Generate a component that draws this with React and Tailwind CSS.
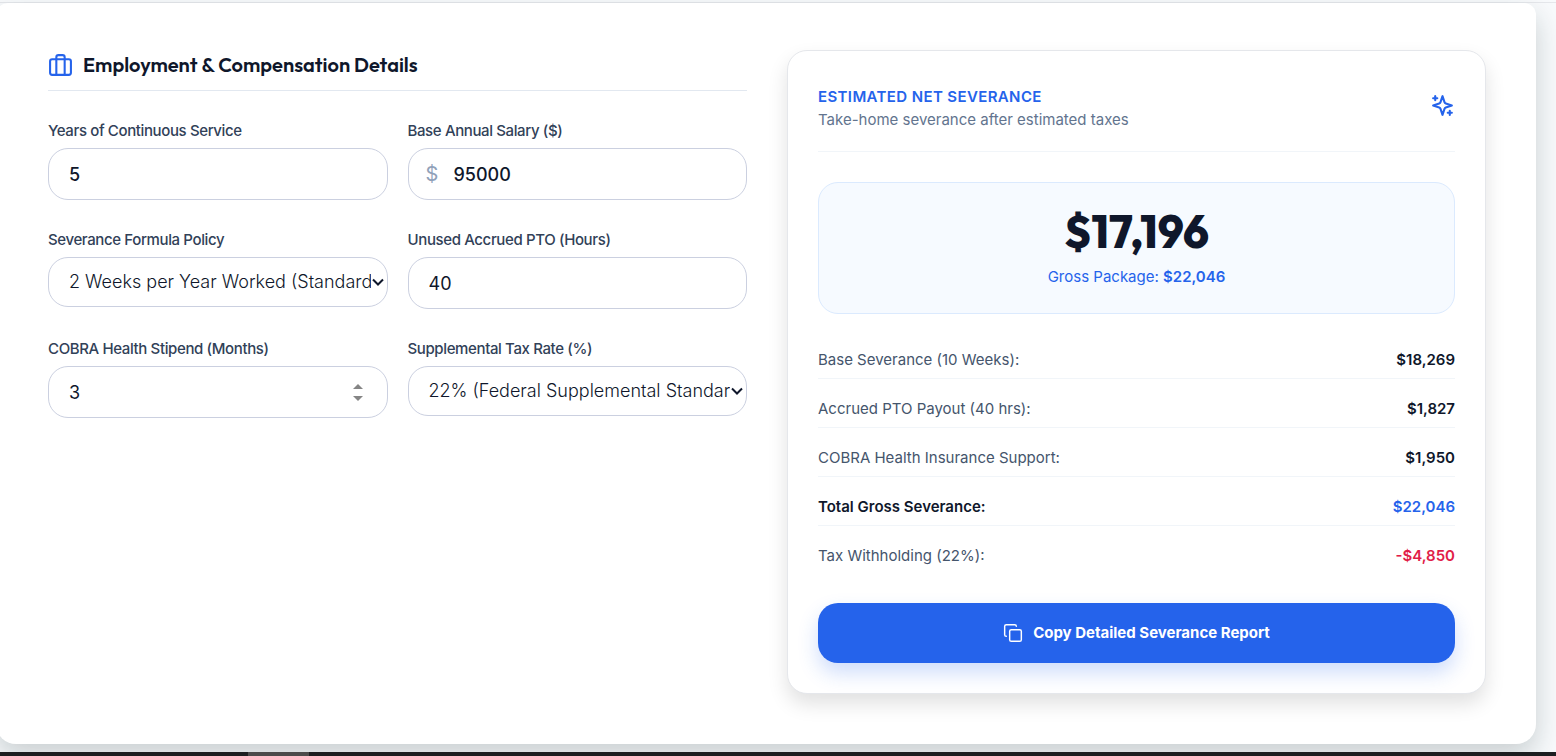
import { useState } from "react";
import { Copy } from "lucide-react";

const labelClass =
  "block mb-[5px] text-[15px] leading-6 font-medium tracking-tight text-slate-700";
const fieldClass =
  "w-full rounded-[20px] border border-[#cbd0e0] bg-white px-5 text-lg text-slate-900 outline-none focus:border-blue-500";
const numberClass =
  "h-[52px] [appearance:textfield] [&::-webkit-inner-spin-button]:appearance-none";

const YEARLY_HOURS = 2080;
const COBRA_MONTHLY = 650;

const money = (value) => "$" + Math.round(value).toLocaleString("en-US");

function BriefcaseIcon() {
  return (
    <svg
      className="size-[25px] shrink-0 text-[#2563eb]"
      viewBox="0 0 24 24"
      fill="none"
      stroke="currentColor"
      strokeWidth="2"
      strokeLinecap="round"
      strokeLinejoin="round"
      aria-hidden="true"
    >
      <rect x="2" y="6" width="20" height="15" rx="2" />
      <path d="M16 21V4a2 2 0 0 0-2-2h-4a2 2 0 0 0-2 2v17" />
    </svg>
  );
}

function SparklesIcon() {
  return (
    <svg
      className="mt-2 size-[25px] shrink-0 text-[#2563eb]"
      viewBox="0 0 24 24"
      fill="none"
      stroke="currentColor"
      strokeWidth="2"
      strokeLinecap="round"
      strokeLinejoin="round"
      aria-hidden="true"
    >
      <path d="m12 3-1.912 5.813a2 2 0 0 1-1.275 1.275L3 12l5.813 1.912a2 2 0 0 1 1.275 1.275L12 21l1.912-5.813a2 2 0 0 1 1.275-1.275L21 12l-5.813-1.912a2 2 0 0 1-1.275-1.275L12 3Z" />
      <path d="M5 3v4" />
      <path d="M19 17v4" />
      <path d="M3 5h4" />
      <path d="M17 19h4" />
    </svg>
  );
}

function SelectField({ id, label, value, onChange, children }) {
  return (
    <div>
      <label htmlFor={id} className={labelClass}>
        {label}
      </label>
      <div className="relative">
        <select
          id={id}
          value={value}
          onChange={onChange}
          className={`${fieldClass} h-[50px] appearance-none pr-4 font-light`}
        >
          {children}
        </select>
        <svg
          className="pointer-events-none absolute right-1 top-1/2 h-2 w-3 -translate-y-1/2 text-slate-900"
          viewBox="0 0 12 8"
          fill="none"
          stroke="currentColor"
          strokeWidth="2"
          aria-hidden="true"
        >
          <path d="M1 1.5 6 6.5 11 1.5" />
        </svg>
      </div>
    </div>
  );
}

function ResultRow({ label, value, strong, valueClass = "text-slate-900" }) {
  return (
    <div className="flex justify-between border-b border-slate-100 pb-1.5 text-[15px] leading-6 last:border-0">
      <dt className={strong ? "font-semibold text-slate-900" : "text-slate-600"}>
        {label}
      </dt>
      <dd className={`font-semibold ${valueClass}`}>{value}</dd>
    </div>
  );
}

export default function App() {
  const [years, setYears] = useState(5);
  const [salary, setSalary] = useState(95000);
  const [weeksPerYear, setWeeksPerYear] = useState(2);
  const [ptoHours, setPtoHours] = useState(40);
  const [cobraMonths, setCobraMonths] = useState(3);
  const [taxRate, setTaxRate] = useState(22);

  const weeks = years * weeksPerYear;
  const base = (salary / 52) * weeks;
  const pto = (salary / YEARLY_HOURS) * ptoHours;
  const cobra = cobraMonths * COBRA_MONTHLY;
  const gross = base + pto + cobra;
  const tax = gross * (taxRate / 100);
  const net = gross - tax;

  const copyReport = () => {
    navigator.clipboard?.writeText(
      `Gross: ${money(gross)}\nTax: ${money(tax)}\nNet: ${money(net)}`
    );
  };

  return (
    <div className="overflow-hidden bg-slate-50 font-['Inter',sans-serif]">
      <div className="h-[3px] border-b border-gray-200" />

      <main className="-ml-1 mr-5 grid grid-cols-2 gap-10 rounded-[20px] rounded-t-xl bg-white pt-[47px] pb-[50px] pl-[52px] pr-[50px] shadow-[0_12px_28px_rgba(15,40,40,0.2)]">
        {/* Form */}
        <section>
          <div className="flex h-[41px] items-center gap-2.5 border-b border-slate-200 pb-2.5">
            <BriefcaseIcon />
            <h2 className="font-['Outfit','Lato',sans-serif] text-xl leading-7 font-semibold text-slate-900">
              Employment &amp; Compensation Details
            </h2>
          </div>

          <div className="mt-7 grid grid-cols-2 gap-x-5 gap-y-7">
            <div>
              <label htmlFor="years" className={labelClass}>
                Years of Continuous Service
              </label>
              <input
                id="years"
                type="number"
                value={years}
                onChange={(e) => setYears(Number(e.target.value))}
                className={`${fieldClass} ${numberClass} font-medium`}
              />
            </div>

            <div>
              <label htmlFor="salary" className={labelClass}>
                Base Annual Salary ($)
              </label>
              <div className="relative">
                <span className="absolute left-[18px] top-1/2 -translate-y-1/2 text-xl text-slate-400">
                  $
                </span>
                <input
                  id="salary"
                  type="number"
                  value={salary}
                  onChange={(e) => setSalary(Number(e.target.value))}
                  className={`${fieldClass} ${numberClass} pl-[45px] font-medium`}
                />
              </div>
            </div>

            <SelectField
              id="policy"
              label="Severance Formula Policy"
              value={weeksPerYear}
              onChange={(e) => setWeeksPerYear(Number(e.target.value))}
            >
              <option value={1}>1 Week per Year Worked</option>
              <option value={2}>2 Weeks per Year Worked (Standard)</option>
              <option value={4}>4 Weeks per Year Worked</option>
            </SelectField>

            <div>
              <label htmlFor="pto" className={labelClass}>
                Unused Accrued PTO (Hours)
              </label>
              <input
                id="pto"
                type="number"
                value={ptoHours}
                onChange={(e) => setPtoHours(Number(e.target.value))}
                className={`${fieldClass} ${numberClass}`}
              />
            </div>

            <div>
              <label htmlFor="cobra" className={labelClass}>
                COBRA Health Stipend (Months)
              </label>
              <div className="relative">
                <input
                  id="cobra"
                  type="number"
                  value={cobraMonths}
                  onChange={(e) => setCobraMonths(Number(e.target.value))}
                  className={`${fieldClass} ${numberClass}`}
                />
                <div className="absolute inset-y-0 right-6 flex flex-col justify-center gap-1">
                  <button
                    type="button"
                    aria-label="Increase months"
                    onClick={() => setCobraMonths(cobraMonths + 1)}
                    className="flex h-2 w-3 items-center justify-center"
                  >
                    <svg className="h-[5px] w-2.5 fill-[#858585]" viewBox="0 0 10 5">
                      <path d="M0 5 5 0l5 5z" />
                    </svg>
                  </button>
                  <button
                    type="button"
                    aria-label="Decrease months"
                    onClick={() => setCobraMonths(Math.max(0, cobraMonths - 1))}
                    className="flex h-2 w-3 items-center justify-center"
                  >
                    <svg className="h-[5px] w-2.5 fill-[#858585]" viewBox="0 0 10 5">
                      <path d="M0 0l5 5 5-5z" />
                    </svg>
                  </button>
                </div>
              </div>
            </div>

            <SelectField
              id="tax"
              label="Supplemental Tax Rate (%)"
              value={taxRate}
              onChange={(e) => setTaxRate(Number(e.target.value))}
            >
              <option value={22}>22% (Federal Supplemental Standard)</option>
              <option value={30}>30% (Federal + State)</option>
              <option value={37}>37% (High Earner)</option>
            </SelectField>
          </div>
        </section>

        {/* Results */}
        <section className="rounded-[20px] border border-gray-200 bg-white p-[30px] shadow-[0_10px_20px_rgba(0,0,0,0.12)]">
          <div className="flex items-start justify-between border-b border-slate-100 pb-5 pt-1">
            <div>
              <h3 className="text-[15px] leading-[23px] font-semibold tracking-wide text-[#2563eb] uppercase">
                Estimated Net Severance
              </h3>
              <p className="text-[15px] leading-[23px] text-slate-500">
                Take-home severance after estimated taxes
              </p>
            </div>
            <SparklesIcon />
          </div>

          <div className="mt-[30px] rounded-[20px] border border-blue-100 bg-[#f6faff] py-6 text-center">
            <p className="font-['Outfit','Lato',sans-serif] text-[45px] leading-[50px] font-extrabold text-slate-900">
              {money(net)}
            </p>
            <p className="mt-2 text-[15px] leading-6 text-[#2563eb]">
              Gross Package: <strong className="font-semibold">{money(gross)}</strong>
            </p>
          </div>

          <dl className="mt-[34px] flex flex-col gap-[18px]">
            <ResultRow label={`Base Severance (${weeks} Weeks):`} value={money(base)} />
            <ResultRow label={`Accrued PTO Payout (${ptoHours} hrs):`} value={money(pto)} />
            <ResultRow label="COBRA Health Insurance Support:" value={money(cobra)} />
            <ResultRow
              label="Total Gross Severance:"
              value={money(gross)}
              strong
              valueClass="text-[#2563eb]"
            />
            <ResultRow
              label={`Tax Withholding (${taxRate}%):`}
              value={`-${money(tax)}`}
              valueClass="text-[#e11d48]"
            />
          </dl>

          <button
            type="button"
            onClick={copyReport}
            className="mt-[29px] flex h-[60px] w-full items-center justify-center gap-2.5 rounded-[20px] bg-[#2563eb] text-[15px] font-bold text-white shadow-[0_10px_20px_rgba(37,99,235,0.22)]"
          >
            <Copy size={20} strokeWidth={1.75} />
            Copy Detailed Severance Report
          </button>
        </section>
      </main>

      <div className="relative mt-2 h-1 bg-[#1c1e20] pl-[248px]">
        <div className="h-full w-[61px] bg-[#4b4b4b]" />
      </div>
    </div>
  );
}
